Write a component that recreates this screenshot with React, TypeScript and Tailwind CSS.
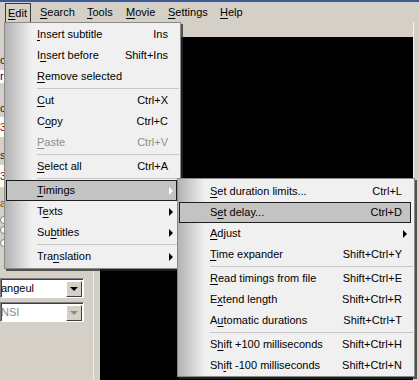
import React from 'react';

type Entry =
  | { sep: true }
  | { sep?: false; label: string; u: number; sc?: string; arrow?: boolean; active?: boolean; disabled?: boolean };

const editMenu: Entry[] = [
  { label: 'Insert subtitle', u: 0, sc: 'Ins' },
  { label: 'Insert before', u: 1, sc: 'Shift+Ins' },
  { label: 'Remove selected', u: 0 },
  { sep: true },
  { label: 'Cut', u: 0, sc: 'Ctrl+X' },
  { label: 'Copy', u: 1, sc: 'Ctrl+C' },
  { label: 'Paste', u: 0, sc: 'Ctrl+V', disabled: true },
  { sep: true },
  { label: 'Select all', u: 0, sc: 'Ctrl+A' },
  { sep: true },
  { label: 'Timings', u: 0, arrow: true, active: true },
  { label: 'Texts', u: 1, arrow: true },
  { label: 'Subtitles', u: 2, arrow: true },
  { sep: true },
  { label: 'Translation', u: 3, arrow: true },
];

const timingsMenu: Entry[] = [
  { label: 'Set duration limits...', u: 0, sc: 'Ctrl+L' },
  { label: 'Set delay...', u: 1, sc: 'Ctrl+D', active: true },
  { label: 'Adjust', u: 0, arrow: true },
  { label: 'Time expander', u: 0, sc: 'Shift+Ctrl+Y' },
  { sep: true },
  { label: 'Read timings from file', u: 0, sc: 'Shift+Ctrl+E' },
  { label: 'Extend length', u: 1, sc: 'Shift+Ctrl+R' },
  { label: 'Automatic durations', u: 1, sc: 'Shift+Ctrl+T' },
  { sep: true },
  { label: 'Shift +100 milliseconds', u: 1, sc: 'Shift+Ctrl+H' },
  { label: 'Shift -100 milliseconds', u: 2, sc: 'Shift+Ctrl+N' },
];

function Mn({ text, u }: { text: string; u: number }) {
  return (
    <span className="whitespace-pre">
      {text.slice(0, u)}
      <span className="underline underline-offset-[2px]">{text[u]}</span>
      {text.slice(u + 1)}
    </span>
  );
}

function MenuList({ items }: { items: Entry[] }) {
  return (
    <>
      {items.map((it, i) =>
        it.sep ? (
          <div key={i} className="h-[3px] flex items-center ml-[32px] mr-[1px]">
            <div className="h-px w-full bg-[#c6c6c6]" />
          </div>
        ) : (
          <div
            key={i}
            className={`h-[21px] ml-[1px] mr-[3px] flex items-center pl-[30px] pr-[8px] border ${
              it.active ? 'border-[#1e1e1e] bg-[#c3c3c3]' : 'border-transparent'
            } ${it.disabled ? 'text-[#8e8e8e]' : 'text-black'}`}
          >
            <Mn text={it.label} u={it.u} />
            {it.sc && <span className="ml-auto whitespace-pre">{it.sc}</span>}
            {it.arrow && (
              <span
                className={`ml-auto mr-[-5px] w-0 h-0 border-y-[4px] border-y-transparent border-l-[4px] ${
                  it.active ? 'border-l-white' : 'border-l-black'
                }`}
              />
            )}
          </div>
        )
      )}
    </>
  );
}

function Combo({ text, disabled }: { text: string; disabled?: boolean }) {
  return (
    <div className="w-[84px] h-[20px] border-t border-l border-[#808080] border-b border-r border-b-white border-r-white">
      <div className="h-full flex items-center bg-white border-t border-l border-[#404040]">
        <span className={`flex-1 -ml-[1px] overflow-hidden whitespace-pre ${disabled ? 'text-[#8a8a8a]' : 'text-black'}`}>{text}</span>
        <div className="w-[16px] h-[16px] mr-[1px] flex items-center justify-center bg-[#d4d0c8] border-t border-l border-white border-b border-r border-b-[#404040] border-r-[#404040]">
          <span
            className={`w-0 h-0 border-x-[4px] border-x-transparent border-t-[4px] ${
              disabled ? 'border-t-[#8a8a8a]' : 'border-t-black'
            }`}
          />
        </div>
      </div>
    </div>
  );
}

export default function App() {
  const bar = [
    { t: 'Search', w: 'w-[47px]' },
    { t: 'Tools', w: 'w-[39px]' },
    { t: 'Movie', w: 'w-[42px]' },
    { t: 'Settings', w: 'w-[52px]' },
    { t: 'Help', w: 'w-[30px]' },
  ];

  return (
    <div className="relative w-[419px] h-[380px] overflow-hidden bg-[#d4d0c8] font-['Liberation_Sans',Arial,sans-serif] text-[11px] leading-none text-black">
      <div className="h-[2px] bg-[#3b5997]" />

      {/* menu bar */}
      <div className="h-[20px] flex items-stretch">
        <div className="ml-[5px] w-[32px] pt-[1px]">
          <div className="w-[26px] h-full flex items-center pl-[2px] border-t border-l border-r border-[#3a3a3a]">
            <Mn text="Edit" u={0} />
          </div>
        </div>
        {bar.map((b) => (
          <div key={b.t} className={`${b.w} flex items-center pl-[3px] pt-[1px]`}>
            <Mn text={b.t} u={0} />
          </div>
        ))}
      </div>

      {/* body */}
      <div className="flex h-[358px]">
        <div className="w-[100px] flex">
          <div className="w-[93px] flex flex-col">
            <span className="mt-[33px] h-[10px] text-[#202020]">o</span>
            <div className="mt-[5px] h-[13px] w-[80px] bg-white flex items-center text-[#000080]">r</div>
            <span className="mt-[20px] h-[10px] text-[#202020]">c</span>
            <div className="mt-[4px] h-[20px] w-[80px] bg-white flex items-center text-[#c00000]">3</div>
            <span className="mt-[13px] h-[10px] text-[#202020]">s</span>
            <div className="mt-[5px] h-[22px] w-[80px] bg-white flex items-center text-[#c00000]">3</div>
            <span className="mt-[11px] h-[10px] text-[#8a4b00]">a</span>
            <div className="mt-[8px] w-[8px] h-[8px] rounded-full bg-white border border-[#808080]" />
            <div className="mt-[2px] w-[8px] h-[8px] rounded-full bg-white border border-[#808080]" />
            <div className="mt-[5px] w-[8px] h-[8px] rounded-full bg-white border border-[#808080]" />
            <div className="mt-[31px]">
              <Combo text="angeul" />
            </div>
            <div className="mt-[4px]">
              <Combo text="NSI" disabled />
            </div>
          </div>
          <div className="w-px bg-[#ecebe6]" />
        </div>
        <div className="w-[313px] flex flex-col">
          <div className="h-[15px]" />
          <div className="flex-1 bg-black" />
        </div>
        <div className="flex-1 border-l border-[#f4f3ef]" />
      </div>

      {/* Edit menu */}
      <div className="absolute left-[4px] top-[22px] w-[177px] pt-[1px] pb-[1px] border border-[#8a8a8a] bg-[linear-gradient(to_right,#b2b2b2,#f0f0f0_27px)] shadow-[2px_2px_0_rgba(40,40,40,0.75)]">
        <MenuList items={editMenu} />
      </div>

      {/* Timings submenu */}
      <div className="absolute left-[177px] top-[178px] w-[238px] pt-[2px] border border-[#8a8a8a] bg-[linear-gradient(to_right,#b2b2b2,#f0f0f0_27px)] shadow-[2px_2px_0_rgba(40,40,40,0.75)]">
        <MenuList items={timingsMenu} />
      </div>
    </div>
  );
}
